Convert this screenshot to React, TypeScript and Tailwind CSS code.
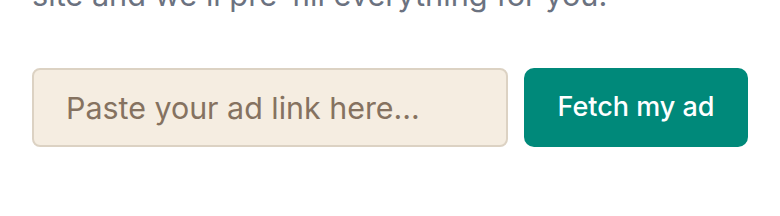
import React from "react";

export default function App() {
  return (
    <div className="w-[780px] h-[216px] bg-white overflow-hidden" style={{ fontFamily: "Inter, 'Liberation Sans', sans-serif" }}>
      <div className="px-8 -mt-[19px]">
        <p className="text-[30.7px] leading-[28px] text-[#6b7280] whitespace-nowrap">site and we'll pre-fill everything for you.</p>
        <div className="mt-[59px] flex gap-4">
          <input
            type="text"
            placeholder="Paste your ad link here..."
            className="w-[476px] h-[79px] rounded-lg border-2 border-[#dcd2c3] bg-[#f5ede1] pl-[32px] text-[30.4px] text-[#7a6a58] placeholder:text-[#857260] outline-none"
          />
          <button className="w-[224px] h-[79px] rounded-[10px] bg-[#00897a] text-white text-[27px] font-medium">
            Fetch my ad
          </button>
        </div>
      </div>
    </div>
  );
}
